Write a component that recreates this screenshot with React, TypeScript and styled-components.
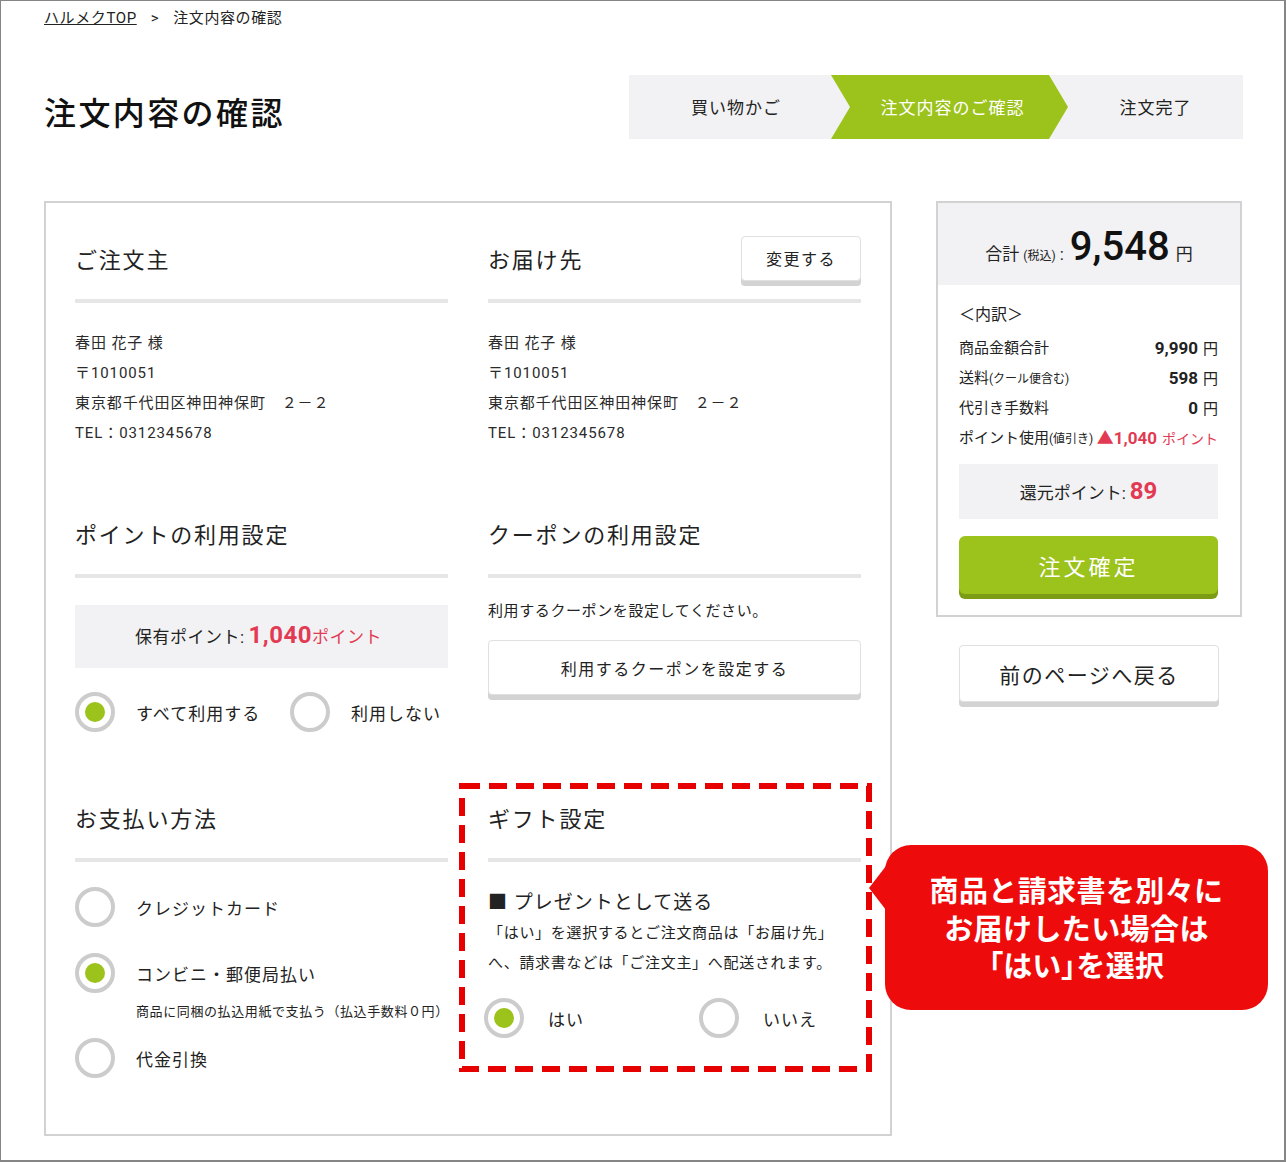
import React from "react";
import styled, { createGlobalStyle } from "styled-components";

const GlobalStyle = createGlobalStyle`
  html, body {
    margin: 0;
    padding: 0;
    background: #fff;
  }
  body {
    font-family: Roboto, "Noto Sans CJK JP", sans-serif;
    color: #222;
  }
  * { box-sizing: border-box; }
`;

const GREEN = "#9cc21c";
const RED = "#e23a52";
const GRAY_BG = "#f2f2f4";
const LINE = "#e6e6e6";

const Frame = styled.div`
  width: 1286px;
  height: 1162px;
  border: 1px solid #858585;
  border-right-width: 2px;
  border-bottom-width: 2px;
  padding: 7px 0 0 43px;
  overflow: hidden;
`;

const Breadcrumb = styled.div`
  display: flex;
  align-items: center;
  gap: 14px;
  font-size: 15px;
  line-height: 20px;
  letter-spacing: 0.6px;
  color: #222;
`;

const CrumbLink = styled.a`
  color: #222;
  text-decoration: underline;
`;

const HeaderRow = styled.div`
  display: flex;
  align-items: center;
  justify-content: space-between;
  width: 1199px;
  margin-top: 47px;
`;

const Title = styled.h1`
  margin: 8px 0 0 0;
  font-size: 32px;
  font-weight: 500;
  letter-spacing: 2.4px;
  color: #111;
`;

const Stepper = styled.div`
  display: grid;
  grid-template-columns: 202px 237px 1fr;
  width: 614px;
  height: 64px;
  background: ${GRAY_BG};
`;

const Step = styled.div<{ $active?: boolean; $shift?: number }>`
  display: flex;
  align-items: center;
  justify-content: center;
  padding-left: ${(p) => p.$shift ?? 0}px;
  padding-bottom: 2px;
  font-size: 17px;
  letter-spacing: 1px;
  color: ${(p) => (p.$active ? "#fff" : "#222")};
  background: ${(p) => (p.$active ? GREEN : "transparent")};
  clip-path: ${(p) =>
    p.$active
      ? "polygon(0 0, calc(100% - 19px) 0, 100% 50%, calc(100% - 19px) 100%, 0 100%, 19px 50%)"
      : "none"};
`;

const MainRow = styled.div`
  display: flex;
  align-items: flex-start;
  gap: 44px;
  margin-top: 62px;
`;

const Card = styled.div`
  width: 848px;
  height: 935px;
  border: 2px solid #d2d2d2;
  padding: 31px 29px 0;
`;

const Grid = styled.div`
  display: grid;
  grid-template-columns: 373px 373px;
  column-gap: 40px;
  row-gap: 61px;
  align-items: start;
`;

const Section = styled.section`
  position: relative;
`;

const SectionHead = styled.div`
  display: flex;
  align-items: center;
  justify-content: space-between;
  height: 69px;
  padding-bottom: 17px;
  border-bottom: 4px solid ${LINE};
`;

const Heading = styled.h2`
  margin: 0;
  font-size: 22px;
  font-weight: 400;
  letter-spacing: 1.8px;
  color: #222;
`;

const ShadowButton = styled.button<{ $w?: string; $h: number; $size: number }>`
  width: ${(p) => p.$w ?? "100%"};
  height: ${(p) => p.$h}px;
  background: #fff;
  border: 1px solid #e0e0e0;
  border-radius: 4px;
  box-shadow: 0 5px 0 #d3d3d3;
  font-family: inherit;
  font-size: ${(p) => p.$size}px;
  letter-spacing: 1.5px;
  color: #222;
  cursor: pointer;
  padding: 0;
`;

const InfoList = styled.div`
  margin-top: 25px;
  font-size: 15px;
  line-height: 30px;
  letter-spacing: 0.9px;
  color: #2a2a2a;
`;

const PointBox = styled.div`
  display: flex;
  align-items: baseline;
  justify-content: center;
  height: 63px;
  padding-top: 16px;
  margin-top: 27px;
  padding-right: 6px;
  background: ${GRAY_BG};
  font-size: 17px;
  letter-spacing: 0.5px;
`;

const RedBig = styled.span<{ $size: number }>`
  color: ${RED};
  font-weight: 700;
  font-size: ${(p) => p.$size}px;
  margin-left: 4px;
`;

const RedText = styled.span`
  color: ${RED};
`;

const RadioRow = styled.div<{ $top: number; $shift?: number }>`
  display: flex;
  align-items: center;
  margin-top: ${(p) => p.$top}px;
  margin-left: ${(p) => p.$shift ?? 0}px;
`;

const RadioOption = styled.label<{ $w?: number; $gap?: number }>`
  display: flex;
  align-items: center;
  gap: ${(p) => p.$gap ?? 21}px;
  width: ${(p) => (p.$w ? `${p.$w}px` : "auto")};
  font-size: 17px;
  letter-spacing: 1px;
  color: #222;
  cursor: pointer;
`;

const Circle = styled.span<{ $checked?: boolean }>`
  display: flex;
  align-items: center;
  justify-content: center;
  flex: none;
  width: 40px;
  height: 40px;
  border-radius: 50%;
  border: 4px solid #cccccc;
  background: #fff;

  &::after {
    content: "";
    width: 20px;
    height: 20px;
    border-radius: 50%;
    background: ${(p) => (p.$checked ? GREEN : "transparent")};
  }
`;

const CouponNote = styled.p`
  margin: 21px 0 17px;
  font-size: 15px;
  line-height: 24px;
  letter-spacing: 0.6px;
`;

const PayList = styled.div`
  display: flex;
  flex-direction: column;
  margin-top: 25px;
`;

const PayNote = styled.p`
  margin: 9px 0 16px 61px;
  font-size: 13px;
  line-height: 20px;
  letter-spacing: 0.6px;
`;

const GiftTitle = styled.p`
  margin: 27px 0 1px;
  font-size: 19px;
  line-height: 28px;
  letter-spacing: 1px;
`;

const GiftDesc = styled.p`
  margin: 0;
  font-size: 15px;
  line-height: 30px;
  letter-spacing: 0.7px;
`;

const DashedFrame = styled.svg`
  position: absolute;
  left: -29px;
  top: -10px;
  width: 413px;
  height: 289px;
  pointer-events: none;
  z-index: 2;
`;

const Callout = styled.div`
  position: absolute;
  left: 397px;
  top: 52px;
  width: 383px;
  height: 165px;
  display: flex;
  align-items: center;
  justify-content: center;
  text-align: center;
  background: #ee0b0b;
  border-radius: 26px;
  color: #fff;
  font-family: "Noto Sans CJK JP", sans-serif;
  font-weight: 700;
  font-size: 29px;
  line-height: 37.5px;
  letter-spacing: 0.4px;
  z-index: 3;

  &::before {
    content: "";
    position: absolute;
    left: -16px;
    top: 21px;
    border-right: 17px solid #ee0b0b;
    border-top: 22px solid transparent;
    border-bottom: 22px solid transparent;
  }
`;

const Tight = styled.span`
  font-feature-settings: "palt";
`;

/* sidebar */

const Side = styled.aside`
  width: 306px;
  display: flex;
  flex-direction: column;
`;

const SummaryBox = styled.div`
  border: 2px solid #d2d2d2;
`;

const TotalHead = styled.div`
  display: flex;
  align-items: baseline;
  justify-content: center;
  height: 82px;
  padding-top: 20px;
  background: ${GRAY_BG};
  font-size: 17px;
`;

const Small = styled.span<{ $m?: number }>`
  font-size: 12px;
  margin: 0 ${(p) => p.$m ?? 2}px;
`;

const TotalNum = styled.span`
  font-size: 40px;
  font-weight: 500;
  margin: 0 6px 0 6px;
  color: #111;
`;

const SummaryBody = styled.div`
  padding: 15px 22px 21px 21px;
`;

const Breakdown = styled.div`
  height: 30px;
  font-size: 16px;
  line-height: 30px;
  margin-bottom: 3px;
`;

const Row = styled.div<{ $red?: boolean }>`
  display: flex;
  align-items: center;
  justify-content: space-between;
  height: 30px;
  white-space: nowrap;
  font-size: 15px;
  line-height: 20px;
  color: ${(p) => (p.$red ? RED : "#222")};
`;

const Label = styled.span`
  color: #222;
`;

const Amount = styled.b`
  font-size: 17px;
  font-weight: 700;
  margin-right: 5px;
`;

const PointUnit = styled.span`
  font-size: 14px;
`;

const ReturnBox = styled.div`
  display: flex;
  align-items: baseline;
  justify-content: center;
  height: 55px;
  padding-top: 13px;
  margin-top: 11px;
  background: ${GRAY_BG};
  font-size: 17px;
`;

const ConfirmButton = styled.button`
  width: 100%;
  height: 58px;
  margin-top: 17px;
  border: none;
  border-radius: 6px;
  background: ${GREEN};
  box-shadow: 0 5px 0 #7d9c15;
  color: #fff;
  font-family: inherit;
  font-size: 22px;
  letter-spacing: 3px;
  cursor: pointer;
`;

const BackWrap = styled.div`
  margin: 28px 23px 0;
`;

export default function App() {
  return (
    <>
      <GlobalStyle />
      <Frame>
        <Breadcrumb>
          <CrumbLink>ハルメクTOP</CrumbLink>
          <span>&gt;</span>
          <span>注文内容の確認</span>
        </Breadcrumb>

        <HeaderRow>
          <Title>注文内容の確認</Title>
          <Stepper>
            <Step $shift={12}>買い物かご</Step>
            <Step $active $shift={6}>注文内容のご確認</Step>
            <Step $shift={-6}>注文完了</Step>
          </Stepper>
        </HeaderRow>

        <MainRow>
          <Card>
            <Grid>
              <Section>
                <SectionHead>
                  <Heading>ご注文主</Heading>
                </SectionHead>
                <InfoList>
                  <div>春田 花子 様</div>
                  <div>〒1010051</div>
                  <div>東京都千代田区神田神保町　２－２</div>
                  <div>TEL：0312345678</div>
                </InfoList>
              </Section>

              <Section>
                <SectionHead>
                  <Heading>お届け先</Heading>
                  <ShadowButton $w="120px" $h={45} $size={16}>変更する</ShadowButton>
                </SectionHead>
                <InfoList>
                  <div>春田 花子 様</div>
                  <div>〒1010051</div>
                  <div>東京都千代田区神田神保町　２－２</div>
                  <div>TEL：0312345678</div>
                </InfoList>
              </Section>

              <Section>
                <SectionHead>
                  <Heading>ポイントの利用設定</Heading>
                </SectionHead>
                <PointBox>
                  保有ポイント:
                  <RedBig $size={24}>1,040</RedBig>
                  <RedText>ポイント</RedText>
                </PointBox>
                <RadioRow $top={24}>
                  <RadioOption $w={215}>
                    <Circle $checked />
                    すべて利用する
                  </RadioOption>
                  <RadioOption>
                    <Circle />
                    利用しない
                  </RadioOption>
                </RadioRow>
              </Section>

              <Section>
                <SectionHead>
                  <Heading>クーポンの利用設定</Heading>
                </SectionHead>
                <CouponNote>利用するクーポンを設定してください。</CouponNote>
                <ShadowButton $h={55} $size={16}>利用するクーポンを設定する</ShadowButton>
              </Section>

              <Section>
                <SectionHead>
                  <Heading>お支払い方法</Heading>
                </SectionHead>
                <PayList>
                  <RadioOption>
                    <Circle />
                    クレジットカード
                  </RadioOption>
                  <RadioRow $top={26}>
                    <RadioOption>
                      <Circle $checked />
                      コンビニ・郵便局払い
                    </RadioOption>
                  </RadioRow>
                  <PayNote>商品に同梱の払込用紙で支払う（払込手数料０円）</PayNote>
                  <RadioOption>
                    <Circle />
                    代金引換
                  </RadioOption>
                </PayList>
              </Section>

              <Section>
                <SectionHead>
                  <Heading>ギフト設定</Heading>
                </SectionHead>
                <GiftTitle>■ プレゼントとして送る</GiftTitle>
                <GiftDesc>
                  「はい」を選択するとご注文商品は「お届け先」
                  <br />
                  へ、請求書などは「ご注文主」へ配送されます。
                </GiftDesc>
                <RadioRow $top={20} $shift={-4}>
                  <RadioOption $w={215} $gap={24}>
                    <Circle $checked />
                    はい
                  </RadioOption>
                  <RadioOption $gap={24}>
                    <Circle />
                    いいえ
                  </RadioOption>
                </RadioRow>

                <DashedFrame viewBox="0 0 413 289">
                  <rect
                    x="3"
                    y="3"
                    width="407"
                    height="283"
                    fill="none"
                    stroke="#e60000"
                    strokeWidth="6"
                    strokeDasharray="18 9"
                  />
                </DashedFrame>
                <Callout>
                  <div>
                    商品と請求書を別々に
                    <br />
                    お届けしたい場合は
                    <br />
                    <Tight>「はい」</Tight>を選択
                  </div>
                </Callout>
              </Section>
            </Grid>
          </Card>

          <Side>
            <SummaryBox>
              <TotalHead>
                合計<Small $m={4}>(税込)</Small>:<TotalNum>9,548</TotalNum>円
              </TotalHead>
              <SummaryBody>
                <Breakdown>＜内訳＞</Breakdown>
                <Row>
                  <Label>商品金額合計</Label>
                  <span><Amount>9,990</Amount>円</span>
                </Row>
                <Row>
                  <Label>送料<Small $m={0}>(クール便含む)</Small></Label>
                  <span><Amount>598</Amount>円</span>
                </Row>
                <Row>
                  <Label>代引き手数料</Label>
                  <span><Amount>0</Amount>円</span>
                </Row>
                <Row $red>
                  <Label>ポイント使用<Small $m={0}>(値引き)</Small></Label>
                  <span><Amount>▲1,040</Amount><PointUnit>ポイント</PointUnit></span>
                </Row>
                <ReturnBox>
                  還元ポイント:<RedBig $size={24}>89</RedBig>
                </ReturnBox>
                <ConfirmButton>注文確定</ConfirmButton>
              </SummaryBody>
            </SummaryBox>
            <BackWrap>
              <ShadowButton $h={57} $size={21}>前のページへ戻る</ShadowButton>
            </BackWrap>
          </Side>
        </MainRow>
      </Frame>
    </>
  );
}
